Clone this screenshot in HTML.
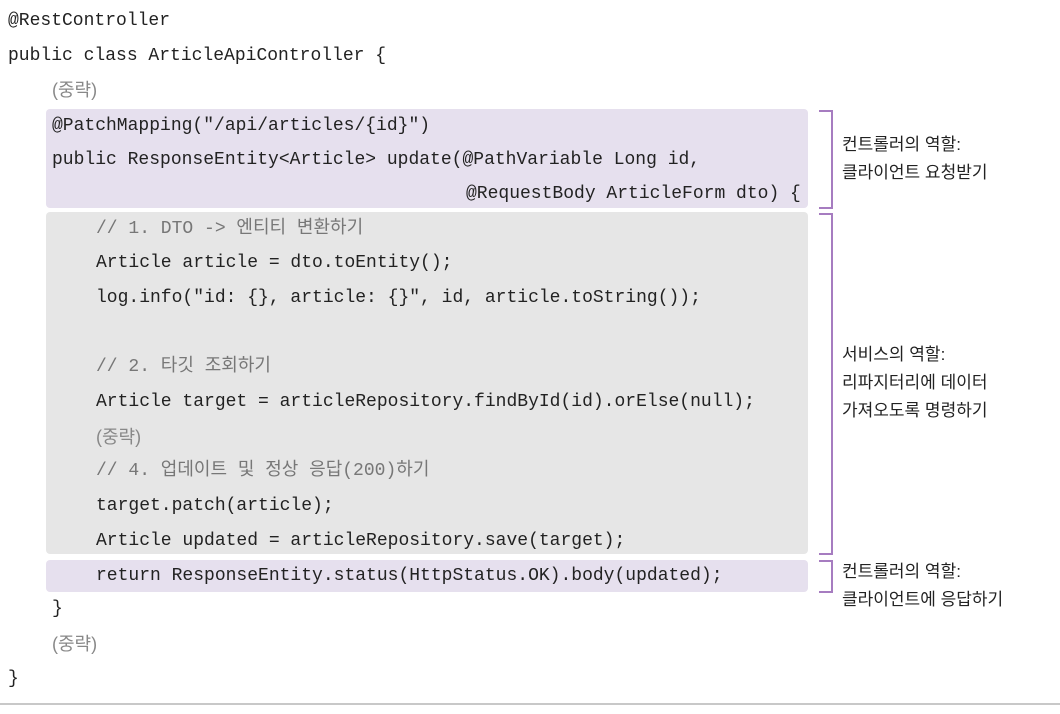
<!DOCTYPE html>
<html><head><meta charset="utf-8"><style>
body{margin:0;width:1060px;height:714px;background:#fff;position:relative;overflow:hidden}
.l{position:absolute;white-space:pre;font-family:"Liberation Mono","Noto Sans CJK KR",monospace;font-size:18px;line-height:34px;height:34px;color:#222}
.g{color:#777}
.k{font-family:"Liberation Sans","Noto Sans CJK KR",sans-serif;color:#888}
.box{position:absolute;border-radius:4px}
.p{background:#e6e0ee}
.gr{background:#e6e6e6}
.br{position:absolute;border:2px solid #a67cc0;border-left:none;width:12px}
.t{position:absolute;font-family:"Liberation Sans","Noto Sans CJK KR",sans-serif;font-size:17px;line-height:28px;color:#222}
</style></head><body>
<div class="box p" style="left:46px;top:109px;width:762px;height:99px"></div>
<div class="box gr" style="left:46px;top:212px;width:762px;height:342px"></div>
<div class="box p" style="left:46px;top:560px;width:762px;height:32px"></div>

<div class="br" style="left:819px;top:110px;height:95px"></div>
<div class="br" style="left:819px;top:213px;height:338px"></div>
<div class="br" style="left:819px;top:560px;height:29px"></div>

<div class="l" style="left:8px;top:4px">@RestController</div>
<div class="l" style="left:8px;top:39px">public class ArticleApiController {</div>
<div class="l k" style="left:52px;top:73px">(중략)</div>
<div class="l" style="left:52px;top:109px">@PatchMapping("/api/articles/{id}")</div>
<div class="l" style="left:52px;top:143px">public ResponseEntity&lt;Article&gt; update(@PathVariable Long id,</div>
<div class="l" style="left:466px;top:177px">@RequestBody ArticleForm dto) {</div>
<div class="l g" style="left:96px;top:212px">// 1. DTO -&gt; 엔티티 변환하기</div>
<div class="l" style="left:96px;top:246px">Article article = dto.toEntity();</div>
<div class="l" style="left:96px;top:281px">log.info("id: {}, article: {}", id, article.toString());</div>
<div class="l g" style="left:96px;top:350px">// 2. 타깃 조회하기</div>
<div class="l" style="left:96px;top:385px">Article target = articleRepository.findById(id).orElse(null);</div>
<div class="l k" style="left:96px;top:420px">(중략)</div>
<div class="l g" style="left:96px;top:454px">// 4. 업데이트 및 정상 응답(200)하기</div>
<div class="l" style="left:96px;top:489px">target.patch(article);</div>
<div class="l" style="left:96px;top:524px">Article updated = articleRepository.save(target);</div>
<div class="l" style="left:96px;top:559px">return ResponseEntity.status(HttpStatus.OK).body(updated);</div>
<div class="l" style="left:52px;top:592px">}</div>
<div class="l k" style="left:52px;top:627px">(중략)</div>
<div class="l" style="left:8px;top:662px">}</div>

<div class="t" style="left:842px;top:131px">컨트롤러의 역할:<br>클라이언트 요청받기</div>
<div class="t" style="left:842px;top:341px">서비스의 역할:<br>리파지터리에 데이터<br>가져오도록 명령하기</div>
<div class="t" style="left:842px;top:558px">컨트롤러의 역할:<br>클라이언트에 응답하기</div>

<div style="position:absolute;left:0;top:703px;width:1060px;height:2px;background:#c8c8c8"></div>
</body></html>
